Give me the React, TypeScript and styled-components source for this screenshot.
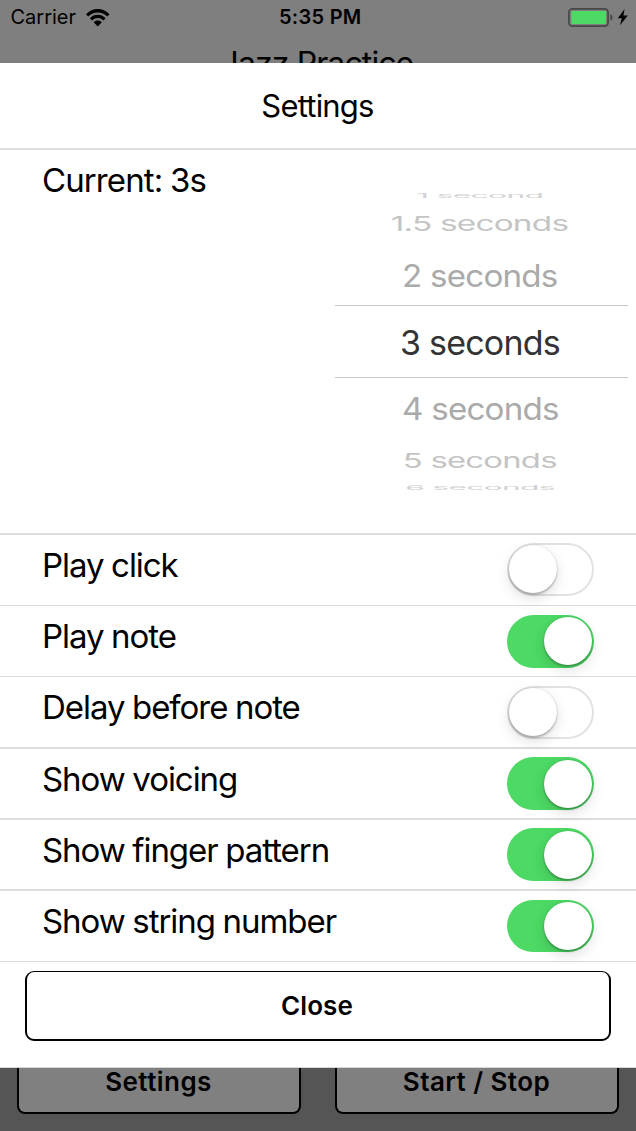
import React, { useState } from 'react';
import styled, { createGlobalStyle } from 'styled-components';

const GlobalStyle = createGlobalStyle`
  * { box-sizing: border-box; }
  html, body { margin: 0; padding: 0; }
  body {
    background: #555;
    color: #000;
    font-family: Inter, 'Liberation Sans', sans-serif;
    overflow: hidden;
  }
  button { font: inherit; color: inherit; cursor: pointer; }
`;

const Screen = styled.div`
  display: flex;
  flex-direction: column;
  width: 636px;
  height: 1131px;
  overflow: hidden;
`;

const Backdrop = styled.div`
  flex: none;
  height: 63px;
  overflow: hidden;
  background: #7f7f7f;
`;

const StatusBar = styled.div`
  display: grid;
  grid-template-columns: 1fr auto 1fr;
  align-items: center;
  height: 35px;
  padding: 0 8px 0 10.5px;
  font-size: 20px;
  line-height: 35px;
`;

const Carrier = styled.div`
  display: flex;
  align-items: center;
  gap: 9.5px;
`;

const Clock = styled.div`
  padding-left: 2px;
  font-weight: 600;
  letter-spacing: 0.3px;
`;

const Power = styled.div`
  display: flex;
  justify-content: flex-end;
  align-items: center;
  padding-bottom: 1.5px;
`;

const AppTitle = styled.div`
  height: 56px;
  padding-top: 9px;
  padding-right: 2px;
  font-size: 32px;
  letter-spacing: -0.9px;
  line-height: 40px;
  text-align: center;
`;

const Sheet = styled.main`
  flex: none;
  display: flex;
  flex-direction: column;
  height: 1005px;
  background: #fff;
  border-bottom: 1px solid #d5dad6;
`;

const SheetTitle = styled.h1`
  margin: 0;
  height: 87px;
  padding-right: 1px;
  border-bottom: 2px solid #dcdcdc;
  font-size: 31px;
  font-weight: 400;
  letter-spacing: -0.8px;
  line-height: 86px;
  text-align: center;
`;

const Interval = styled.section`
  display: flex;
  justify-content: space-between;
  height: 385px;
  padding: 0 8px 0 42px;
  border-bottom: 2px solid #dcdcdc;
`;

const Label = styled.div`
  padding-top: 10px;
  font-size: 33px;
  line-height: 40px;
  letter-spacing: -1.05px;
  word-spacing: -0.6px;
  white-space: pre;
`;

const Current = styled(Label)`
  letter-spacing: -0.9px;
`;

const Picker = styled.div`
  width: 293px;
  padding-top: 42px;
`;

const Option = styled.div<{ $height: number; $color: string; $selected?: boolean }>`
  display: flex;
  align-items: center;
  justify-content: center;
  height: ${(p) => p.$height}px;
  padding-right: 3px;
  overflow: hidden;
  color: ${(p) => p.$color};
  border: solid #c8c8c8;
  border-width: ${(p) => (p.$selected ? '1px 0' : '0')};
`;

const OptionText = styled.span<{ $x: number; $y: number; $shift: number }>`
  flex: none;
  font-size: 34px;
  line-height: 40px;
  letter-spacing: -0.8px;
  white-space: pre;
  transform: translateY(${(p) => p.$shift}px) scale(${(p) => p.$x}, ${(p) => p.$y});
`;

const Row = styled.div<{ $height: number; $line: number }>`
  display: flex;
  justify-content: space-between;
  height: ${(p) => p.$height}px;
  padding: 0 42px;
  border-bottom: ${(p) => p.$line}px solid #dcdcdc;
`;

const Track = styled.button<{ $on: boolean; $top: number }>`
  display: flex;
  align-items: center;
  justify-content: ${(p) => (p.$on ? 'flex-end' : 'flex-start')};
  width: 87px;
  height: ${(p) => (p.$on ? 52.5 : 53)}px;
  margin: ${(p) => p.$top}px 0 0;
  padding: ${(p) => (p.$on ? '0 2.4px 0 0' : '0 0 1px 0.3px')};
  border: ${(p) => (p.$on ? '0' : '2px solid #e2e2e2')};
  border-radius: 27px;
  background: ${(p) => (p.$on ? '#4cd964' : '#fff')};
`;

const Knob = styled.span`
  flex: none;
  width: 48px;
  height: 48px;
  border-radius: 50%;
  background: #fff;
  box-shadow: 0 5px 14px rgba(0, 0, 0, 0.13), 0 2px 2px rgba(0, 0, 0, 0.22), 0 0 2px rgba(0, 0, 0, 0.16);
`;

const CloseButton = styled.button`
  height: 70px;
  margin: 9px 25px 0;
  padding: 1px 2px 0 0;
  border: 2px solid #000;
  border-top-width: 1px;
  border-radius: 9px;
  background: #fff;
  font-size: 26px;
  font-weight: 600;
  letter-spacing: 0.1px;
  line-height: 60px;
`;

const Footer = styled.footer`
  display: flex;
  gap: 34px;
  height: 63px;
  padding: 0 17px 17px;
  background: #555;
`;

const FooterButton = styled.button`
  flex: 1;
  height: 46px;
  padding: 0 1px 17px 0;
  border: 2px solid #000;
  border-top: 0;
  border-radius: 0 0 8px 8px;
  background: #808080;
  font-size: 26px;
  font-weight: 600;
  letter-spacing: 0.45px;
  line-height: 28px;
`;

const WifiIcon = () => (
  <svg width="24" height="18" viewBox="0 0 24 18">
    <path d="M0 5.300C6.500-1.700 17-1.700 23.500 5.300L21.300 7.500C16 2.200 7.500 2.200 2.200 7.500z" />
    <path d="M3.900 9.300C8.200 4.700 15.300 4.700 19.600 9.300L17.400 11.500C14.200 8.200 9.300 8.200 6.100 11.500z" />
    <path d="M7.700 13.200C9.900 10.900 13.600 10.900 15.800 13.200L11.750 17.500z" />
  </svg>
);

const BatteryIcon = () => (
  <svg width="62" height="20" viewBox="0 0 62 20">
    <rect x="2.900" y="1.900" width="39.200" height="17.200" rx="3.500" fill="none" stroke="#484848" strokeWidth="1.700" />
    <rect x="5.400" y="4" width="34.600" height="13" rx="1.200" fill="#4cd964" />
    <path d="M44.300 7.300c3 .8 3 5.600 0 6.400z" fill="#484848" />
    <path d="M58.600 2 51.800 11.200H55.800L54 18.200 61.800 8.500H57.400z" fill="#000" />
  </svg>
);

const options = [
  { text: '1 second', height: 6, x: 0.94, y: 0.2, shift: 1, color: '#d2d2d2' },
  { text: '1.5 seconds', height: 51, x: 0.98, y: 0.6, shift: -0.2, color: '#c4c4c4' },
  { text: '2 seconds', height: 56, x: 0.975, y: 0.9, shift: -1, color: '#aaa' },
  { text: '3 seconds', height: 73, x: 1, y: 1, shift: 0.5, color: '#333', selected: true },
  { text: '4 seconds', height: 57, x: 0.975, y: 0.9, shift: 2, color: '#aaa' },
  { text: '5 seconds', height: 50, x: 0.965, y: 0.6, shift: 1, color: '#c4c4c4' },
  { text: '6 seconds', height: 6, x: 0.935, y: 0.2, shift: 0, color: '#d2d2d2' },
];

const rows = [
  { text: 'Play click', on: false, height: 71, line: 1, top: 8.4 },
  { text: 'Play note', on: true, height: 71, line: 1, top: 9 },
  { text: 'Delay before note', on: false, height: 72, line: 2, top: 9 },
  { text: 'Show voicing', on: true, height: 71, line: 2, top: 8.3 },
  { text: 'Show finger pattern', on: true, height: 71, line: 2, top: 8.4 },
  { text: 'Show string number', on: true, height: 71, line: 1, top: 8.7 },
];

export default function App() {
  const [values, setValues] = useState(rows.map((r) => r.on));
  const toggle = (i: number) => setValues((v) => v.map((on, j) => (j === i ? !on : on)));

  return (
    <>
      <GlobalStyle />
      <Screen>
        <Backdrop>
          <StatusBar>
            <Carrier>
              Carrier
              <WifiIcon />
            </Carrier>
            <Clock>5:35 PM</Clock>
            <Power>
              <BatteryIcon />
            </Power>
          </StatusBar>
          <AppTitle>Jazz Practice</AppTitle>
        </Backdrop>
        <Sheet>
          <SheetTitle>Settings</SheetTitle>
          <Interval>
            <Current>Current: 3s</Current>
            <Picker>
              {options.map((o) => (
                <Option key={o.text} $height={o.height} $color={o.color} $selected={o.selected}>
                  <OptionText $x={o.x} $y={o.y} $shift={o.shift}>
                    {o.text}
                  </OptionText>
                </Option>
              ))}
            </Picker>
          </Interval>
          {rows.map((r, i) => (
            <Row key={r.text} $height={r.height} $line={r.line}>
              <Label>{r.text}</Label>
              <Track
                $on={values[i]}
                $top={r.top}
                role="switch"
                aria-checked={values[i]}
                aria-label={r.text}
                onClick={() => toggle(i)}
              >
                <Knob />
              </Track>
            </Row>
          ))}
          <CloseButton>Close</CloseButton>
        </Sheet>
        <Footer>
          <FooterButton>Settings</FooterButton>
          <FooterButton>Start / Stop</FooterButton>
        </Footer>
      </Screen>
    </>
  );
}
